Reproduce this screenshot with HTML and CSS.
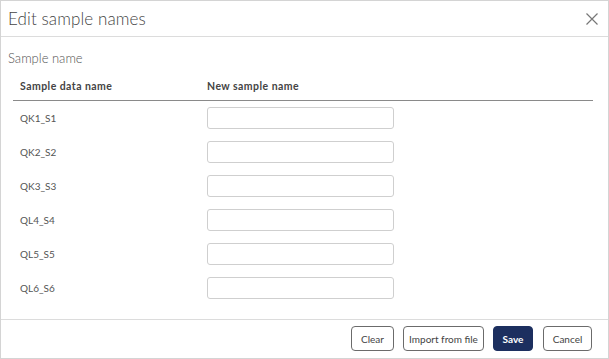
FILE: index.html
```html
<!DOCTYPE html>
<html>
<head>
<meta charset="utf-8">
<link rel="stylesheet" href="styles.css">
</head>
<body>
<div class="dialog">
  <div class="header">
    <div class="title">Edit sample names</div>
    <svg class="close" width="12" height="12" viewBox="0 0 12 12"><path d="M0.5 0.5 L11.5 11.5 M11.5 0.5 L0.5 11.5" stroke="#777" stroke-width="1.2" fill="none"/></svg>
  </div>
  <div class="body">
    <div class="section">Sample name</div>
    <div class="grid">
      <div class="row head">
        <div class="cell">Sample data name</div>
        <div class="cell">New sample name</div>
      </div>
      <div class="row"><div class="cell">QK1_S1</div><div class="cell"><input class="inp" type="text"></div></div>
      <div class="row"><div class="cell">QK2_S2</div><div class="cell"><input class="inp" type="text"></div></div>
      <div class="row"><div class="cell">QK3_S3</div><div class="cell"><input class="inp" type="text"></div></div>
      <div class="row"><div class="cell">QL4_S4</div><div class="cell"><input class="inp" type="text"></div></div>
      <div class="row"><div class="cell">QL5_S5</div><div class="cell"><input class="inp" type="text"></div></div>
      <div class="row"><div class="cell">QL6_S6</div><div class="cell"><input class="inp" type="text"></div></div>
    </div>
  </div>
  <div class="footer">
    <button class="btn b-clear">Clear</button>
    <button class="btn b-import">Import from file</button>
    <button class="btn primary b-save">Save</button>
    <button class="btn b-cancel">Cancel</button>
  </div>
</div>
</body>
</html>
```
FILE: styles.css
```css
* { box-sizing: border-box; }
html, body { margin: 0; padding: 0; background: #fff; }
body { font-family: "Lato", "DejaVu Sans", sans-serif; color: #555; }
.dialog {
  width: 609px; height: 359px;
  border: 1px solid #d4d4d4;
  display: flex; flex-direction: column;
  background: #fff;
}
.header {
  height: 36px; flex: none;
  border-bottom: 1px solid #dcdcdc;
  display: flex; align-items: center; justify-content: space-between;
  padding: 0 10px 0 7px;
}
.title { font-size: 17px; font-weight: 300; color: #444; letter-spacing: 0.1px; }
.close { display: block; margin-top: 1px; }
.body { flex: 1; padding: 13px 15px 0 7px; }
.section { font-size: 13px; font-weight: 300; color: #555; line-height: 16px; height: 16px; }
.grid { margin-left: 5px; margin-top: 2px; }
.row { display: grid; grid-template-columns: 187px 1fr; height: 34px; align-items: center; }
.row.head { height: 33px; border-bottom: 1px solid #8a8a8a; font-weight: 700; padding-top: 3px; }
.cell { padding-left: 7px; font-size: 10px; color: #555; }
.row.head .cell { color: #444; font-size: 10.5px; letter-spacing: 0.45px; }
.inp {
  display: block; width: 187px; height: 22px; margin: 0;
  border: 1px solid #cfcfcf; border-radius: 3px; background: #fff; outline: none;
}
.footer {
  height: 39px; flex: none;
  border-top: 1px solid #dcdcdc;
  display: flex; justify-content: flex-end; align-items: flex-start;
  padding: 6px 16px 0 0; gap: 9px;
}
.btn {
  height: 25px; border: 1px solid #6b6b6b; border-radius: 4px; background: #fff;
  font-family: "Lato", "DejaVu Sans", sans-serif; font-size: 10px; color: #444; padding: 0;
}
.b-clear { width: 43px; }
.b-import { width: 81px; }
.b-save { width: 40px; }
.b-cancel { width: 49px; margin-left: 1px; }
.btn.primary { background: #1c2f5f; border-color: #1c2f5f; color: #fff; font-weight: 700; }
```
